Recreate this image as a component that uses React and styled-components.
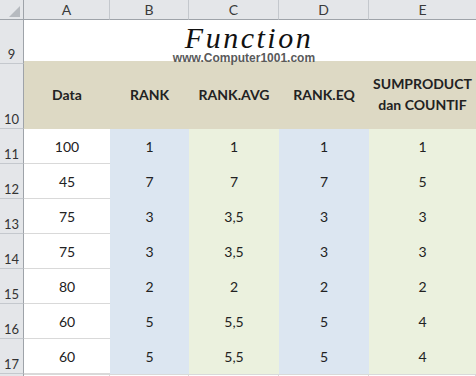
import React from "react";
import styled, { createGlobalStyle, css } from "styled-components";

const GlobalStyle = createGlobalStyle`
  html, body {
    margin: 0;
    padding: 0;
    background: #ffffff;
    overflow: hidden;
  }
  body {
    font-family: Lato, "Open Sans", sans-serif;
    color: #222222;
  }
`;

const COLS = "24px 86px 79px 90px 90px 1fr";
const HEAD_BG = "#e4e6e9";
const HEAD_EDGE = "#9ea3a9";
const HEAD_SEP = "#c4c8cd";
const GRID = "#d9d9d9";

const FILLS = {
  white: "#ffffff",
  blue: "#dce6f1",
  green: "#ebf1de",
};

const Sheet = styled.div`
  width: 476px;
  height: 376px;
  overflow: hidden;
  display: flex;
  flex-direction: column;
`;

const Row = styled.div`
  display: grid;
  grid-template-columns: ${COLS};
  height: ${(p) => p.$h}px;
  flex: none;
  background: ${(p) => p.$bg || "transparent"};
  ${(p) =>
    p.$raised &&
    css`
      position: relative;
      z-index: 1;
    `}
`;

const Corner = styled.div`
  background: ${HEAD_BG};
  border-right: 1px solid ${HEAD_EDGE};
  border-bottom: 1px solid ${HEAD_EDGE};
  display: flex;
  align-items: flex-end;
  justify-content: flex-end;
  padding: 0 3px 2px 0;
`;

const CornerMark = styled.div`
  width: 0;
  height: 0;
  border-left: 11px solid transparent;
  border-bottom: 11px solid #b6babf;
`;

const ColHead = styled.div`
  background: ${HEAD_BG};
  border-bottom: 1px solid ${HEAD_EDGE};
  border-right: 1px solid ${HEAD_SEP};
  display: flex;
  align-items: center;
  justify-content: center;
  font-size: 14px;
  color: #3a3a3a;
  ${(p) =>
    p.$last &&
    css`
      border-right: none;
    `}
`;

const RowHead = styled.div`
  background: ${HEAD_BG};
  border-right: 1px solid ${HEAD_EDGE};
  border-bottom: 1px solid ${HEAD_SEP};
  display: flex;
  align-items: flex-end;
  justify-content: center;
  padding-bottom: 1px;
  font-size: 13px;
  line-height: 16px;
  color: #333333;
`;

const TitleCell = styled.div`
  grid-column: 2 / span 5;
  display: flex;
  flex-direction: column;
  align-items: center;
  padding-top: 4px;
  padding-left: 4px;
`;

const Title = styled.div`
  font-family: "Liberation Serif", "Times New Roman", serif;
  font-style: italic;
  font-size: 30px;
  line-height: 28px;
  letter-spacing: 2.5px;
  margin-right: 6px;
  color: #111111;
`;

const Url = styled.div`
  font-family: "Liberation Sans", Arial, sans-serif;
  font-weight: bold;
  font-size: 12px;
  line-height: 12px;
  margin-right: 16px;
  color: #5a5a5a;
`;

const HeadCell = styled.div`
  display: flex;
  align-items: center;
  justify-content: center;
  text-align: center;
  font-weight: bold;
  font-size: 14px;
  line-height: 21px;
  color: #222222;
  padding-bottom: 2px;
`;

const Cell = styled.div`
  display: flex;
  align-items: center;
  justify-content: center;
  font-size: 14px;
  color: #222222;
  background: ${(p) => FILLS[p.$fill]};
  border-bottom: 1px solid
    ${(p) => (p.$fill === "white" ? GRID : FILLS[p.$fill])};
`;

const BlankCell = styled.div`
  border-top: 1px solid ${GRID};
  border-right: 1px solid ${GRID};
`;

const columns = ["A", "B", "C", "D", "E"];
const fills = ["white", "blue", "green", "blue", "green"];

const data = [
  [11, "100", "1", "1", "1", "1"],
  [12, "45", "7", "7", "7", "5"],
  [13, "75", "3", "3,5", "3", "3"],
  [14, "75", "3", "3,5", "3", "3"],
  [15, "80", "2", "2", "2", "2"],
  [16, "60", "5", "5,5", "5", "4"],
  [17, "60", "5", "5,5", "5", "4"],
];

export default function App() {
  return (
    <>
      <GlobalStyle />
      <Sheet>
        <Row $h={20}>
          <Corner>
            <CornerMark />
          </Corner>
          {columns.map((c, i) => (
            <ColHead key={c} $last={i === columns.length - 1}>
              {c}
            </ColHead>
          ))}
        </Row>
        <Row $h={41} $raised>
          <RowHead>9</RowHead>
          <TitleCell>
            <Title>Function</Title>
            <Url>www.Computer1001.com</Url>
          </TitleCell>
        </Row>
        <Row $h={68} $bg="#ddd9c4">
          <RowHead>10</RowHead>
          <HeadCell>Data</HeadCell>
          <HeadCell>RANK</HeadCell>
          <HeadCell>RANK.AVG</HeadCell>
          <HeadCell>RANK.EQ</HeadCell>
          <HeadCell>
            SUMPRODUCT
            <br />
            dan COUNTIF
          </HeadCell>
        </Row>
        {data.map(([n, ...vals]) => (
          <Row key={n} $h={35}>
            <RowHead>{n}</RowHead>
            {vals.map((v, i) => (
              <Cell key={i} $fill={fills[i]}>
                {v}
              </Cell>
            ))}
          </Row>
        ))}
        <Row $h={20}>
          <RowHead />
          {columns.map((c) => (
            <BlankCell key={c} />
          ))}
        </Row>
      </Sheet>
    </>
  );
}
